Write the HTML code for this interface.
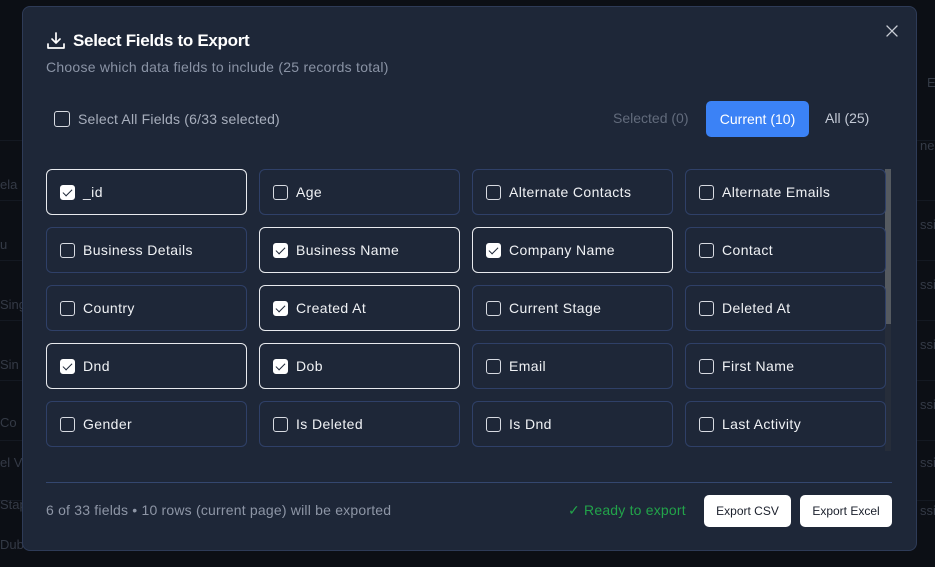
<!DOCTYPE html>
<html><head><style>
*{box-sizing:border-box;margin:0;padding:0}
body{width:935px;height:567px;background:#0c0f15;font-family:"Liberation Sans",sans-serif;position:relative;overflow:hidden}
.bgrow{position:absolute;left:0;width:935px;height:1px;background:#141922}
.bgt{position:absolute;color:#343a46;font-size:13px}
.modal{position:absolute;left:22px;top:6px;width:895px;height:545px;background:#1e2738;border:1px solid #2e3b57;border-radius:8px}
.title{position:absolute;left:73px;top:31px;color:#fff;font-size:17px;font-weight:bold;letter-spacing:-0.3px}
.sub{position:absolute;left:46px;top:59px;color:#8a93a5;font-size:14px;letter-spacing:0.25px}
.cb{position:absolute;width:15px;height:15px;border:1.5px solid #d8dbe2;border-radius:3px}
.cb.on{background:#fff;border-color:#fff}
.cb.on:after{content:"";position:absolute;left:4px;top:1px;width:4px;height:8px;border:solid #1e2738;border-width:0 1.5px 1.5px 0;transform:rotate(45deg)}
.card{position:absolute;width:201px;height:46px;border:1px solid #2f4068;border-radius:6px}
.card.sel{border-color:#e8eaee}
.card .cb{left:13px;top:15px}
.card span{position:absolute;left:36px;top:14px;color:#f0f2f5;font-size:14px;letter-spacing:0.4px;font-weight:500}
.tab{position:absolute;top:110px;font-size:14px}
.btn{position:absolute;top:495px;height:32px;background:#fff;border-radius:5px;color:#1a1f2b;font-size:12px;text-align:center;line-height:32px}
</style></head><body>
<div class="bgrow" style="top:140px"></div><div class="bgrow" style="top:200px"></div><div class="bgrow" style="top:260px"></div><div class="bgrow" style="top:320px"></div><div class="bgrow" style="top:380px"></div><div class="bgrow" style="top:440px"></div><div class="bgrow" style="top:500px"></div>
<div class="bgt" style="left:0;top:177px">ela</div><div class="bgt" style="left:0;top:237px">u</div><div class="bgt" style="left:0;top:297px">Sing</div><div class="bgt" style="left:0;top:357px">Sin</div><div class="bgt" style="left:0;top:415px">Co</div><div class="bgt" style="left:0;top:455px">el V</div><div class="bgt" style="left:0;top:497px">Stap</div><div class="bgt" style="left:0;top:537px">Dub</div>
<div class="bgt" style="left:920px;top:138px">ne</div><div class="bgt" style="left:920px;top:217px">ssig</div><div class="bgt" style="left:920px;top:277px">ssig</div><div class="bgt" style="left:920px;top:337px">ssig</div><div class="bgt" style="left:920px;top:397px">ssig</div><div class="bgt" style="left:920px;top:455px">ssig</div><div class="bgt" style="left:920px;top:503px">ssig</div><div class="bgt" style="left:927px;top:75px">E</div>
<div class="modal"></div>
<svg style="position:absolute;left:46px;top:31px" width="20" height="20" viewBox="0 0 20 20" fill="none" stroke="#fff" stroke-width="1.7" stroke-linecap="round" stroke-linejoin="round"><path d="M10 2v10M6 8l4 4 4-4M2 13v4h16v-4"/></svg>
<div class="title">Select Fields to Export</div>
<div class="sub">Choose which data fields to include (25 records total)</div>
<svg style="position:absolute;left:886px;top:25px" width="12" height="12" viewBox="0 0 12 12" stroke="#c8ccd4" stroke-width="1.3" stroke-linecap="round"><path d="M1 1l10 10M11 1L1 11"/></svg>
<div class="cb" style="left:54px;top:111px;width:16px;height:16px"></div>
<div style="position:absolute;left:78px;top:111px;color:#a8afbd;font-size:14px;letter-spacing:0.2px">Select All Fields (6/33 selected)</div>
<div class="tab" style="left:613px;color:#626b7c">Selected (0)</div>
<div style="position:absolute;left:706px;top:101px;width:103px;height:36px;background:#3b82f6;border-radius:5px;color:#fff;font-size:14px;text-align:center;line-height:36px">Current (10)</div>
<div class="tab" style="left:825px;color:#c4cad6">All (25)</div>
<div style="position:absolute;left:885px;top:169px;width:6px;height:155px;background:#555a60"></div>
<div style="position:absolute;left:885px;top:324px;width:6px;height:127px;background:#262d3a"></div>

<div class="card sel" style="left:46px;top:169px"><i class="cb on"></i><span>_id</span></div>
<div class="card" style="left:259px;top:169px"><i class="cb"></i><span>Age</span></div>
<div class="card" style="left:472px;top:169px"><i class="cb"></i><span>Alternate Contacts</span></div>
<div class="card" style="left:685px;top:169px"><i class="cb"></i><span>Alternate Emails</span></div>

<div class="card" style="left:46px;top:227px"><i class="cb"></i><span>Business Details</span></div>
<div class="card sel" style="left:259px;top:227px"><i class="cb on"></i><span>Business Name</span></div>
<div class="card sel" style="left:472px;top:227px"><i class="cb on"></i><span>Company Name</span></div>
<div class="card" style="left:685px;top:227px"><i class="cb"></i><span>Contact</span></div>

<div class="card" style="left:46px;top:285px"><i class="cb"></i><span>Country</span></div>
<div class="card sel" style="left:259px;top:285px"><i class="cb on"></i><span>Created At</span></div>
<div class="card" style="left:472px;top:285px"><i class="cb"></i><span>Current Stage</span></div>
<div class="card" style="left:685px;top:285px"><i class="cb"></i><span>Deleted At</span></div>

<div class="card sel" style="left:46px;top:343px"><i class="cb on"></i><span>Dnd</span></div>
<div class="card sel" style="left:259px;top:343px"><i class="cb on"></i><span>Dob</span></div>
<div class="card" style="left:472px;top:343px"><i class="cb"></i><span>Email</span></div>
<div class="card" style="left:685px;top:343px"><i class="cb"></i><span>First Name</span></div>

<div class="card" style="left:46px;top:401px"><i class="cb"></i><span>Gender</span></div>
<div class="card" style="left:259px;top:401px"><i class="cb"></i><span>Is Deleted</span></div>
<div class="card" style="left:472px;top:401px"><i class="cb"></i><span>Is Dnd</span></div>
<div class="card" style="left:685px;top:401px"><i class="cb"></i><span>Last Activity</span></div>

<div style="position:absolute;left:46px;top:482px;width:846px;height:1px;background:#34476f"></div>
<div style="position:absolute;left:46px;top:502px;color:#8e96a6;font-size:14px;letter-spacing:0.2px">6 of 33 fields • 10 rows (current page) will be exported</div>
<div style="position:absolute;left:568px;top:502px;color:#22a34a;font-size:14px;letter-spacing:0.2px">✓ Ready to export</div>
<div class="btn" style="left:704px;width:87px">Export CSV</div>
<div class="btn" style="left:800px;width:92px">Export Excel</div>
</body></html>
